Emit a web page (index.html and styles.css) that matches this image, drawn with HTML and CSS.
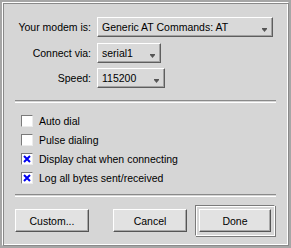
FILE: index.html
```html
<!DOCTYPE html>
<html lang="en">
<head>
  <meta charset="UTF-8">
  <title>Modem settings</title>
  <link rel="stylesheet" href="styles.css">
</head>
<body>
  <div class="window">
    <div class="frame">

      <!-- modem / port / speed -->
      <div class="form">
        <div class="row row-modem">
          <span class="label">Your modem is:</span>
          <div class="combo combo-modem">
            <span>Generic AT Commands: AT</span>
            <svg class="arrow" width="5" height="4" viewBox="0 0 5 4"><rect x="0" y="0" width="5" height="1" fill="#555"/><polygon points="0,1 5,1 2.5,4" fill="#555"/></svg>
          </div>
        </div>
        <div class="row row-port">
          <span class="label">Connect via:</span>
          <div class="combo combo-port">
            <span>serial1</span>
            <svg class="arrow" width="5" height="4" viewBox="0 0 5 4"><rect x="0" y="0" width="5" height="1" fill="#555"/><polygon points="0,1 5,1 2.5,4" fill="#555"/></svg>
          </div>
        </div>
        <div class="row row-speed">
          <span class="label">Speed:</span>
          <div class="combo combo-speed">
            <span>115200</span>
            <svg class="arrow" width="5" height="4" viewBox="0 0 5 4"><rect x="0" y="0" width="5" height="1" fill="#555"/><polygon points="0,1 5,1 2.5,4" fill="#555"/></svg>
          </div>
        </div>
      </div>

      <div class="separator"></div>

      <!-- options -->
      <div class="options">
        <label class="check"><span class="box"></span>Auto dial</label>
        <label class="check"><span class="box"></span>Pulse dialing</label>
        <label class="check"><span class="box"><svg width="8" height="8" viewBox="0 0 8 8"><path d="M1 1 L7 7 M7 1 L1 7" stroke="#0000f0" stroke-width="2"/></svg></span>Display chat when connecting</label>
        <label class="check"><span class="box"><svg width="8" height="8" viewBox="0 0 8 8"><path d="M1 1 L7 7 M7 1 L1 7" stroke="#0000f0" stroke-width="2"/></svg></span>Log all bytes sent/received</label>
      </div>

      <div class="separator sep-bottom"></div>

      <div class="buttons">
        <button class="btn btn-custom">Custom...</button>
        <button class="btn btn-cancel">Cancel</button>
        <div class="default-ring">
          <button class="btn btn-done">Done</button>
        </div>
      </div>

    </div>
  </div>
</body>
</html>
```

FILE: styles.css
```css
body {
  margin: 0;
  background: #d6d6d6;
  font-family: "Liberation Sans", Arial, sans-serif;
  font-size: 10.5px;
  color: #000;
}
.window {
  width: 291px;
  height: 248px;
  box-sizing: border-box;
  border: 2px solid #a6a6a6;
  background: #d6d6d6;
}
.frame {
  height: 100%;
  box-sizing: border-box;
  border-top: 1px solid #ffffff;
  border-left: 1px solid #ffffff;
  border-right: 1px solid #8a8a8a;
  border-bottom: 1px solid #8a8a8a;
  box-shadow: inset 1px 1px 0 #8a8a8a, inset -1px -1px 0 #ffffff;
  padding-top: 14px;
}
.form {
  display: flex;
  flex-direction: column;
}
.row {
  display: grid;
  grid-template-columns: 88px auto;
  column-gap: 6px;
  align-items: center;
  height: 20px;
}
.row-port { margin-top: 6px; }
.row-speed { margin-top: 5px; }
.label {
  text-align: right;
}
.combo {
  height: 20px;
  box-sizing: border-box;
  display: flex;
  align-items: center;
  position: relative;
  padding-left: 4px;
  background: #d9d9d9;
  border-top: 1px solid #ffffff;
  border-left: 1px solid #ffffff;
  border-right: 1px solid #5e5e5e;
  border-bottom: 1px solid #5e5e5e;
  box-shadow: inset -1px -1px 0 #a2a2a2;
}
.combo-modem { width: 176px; }
.combo-port { width: 64px; }
.combo-speed { width: 68px; }
.arrow {
  position: absolute;
  right: 5px;
  bottom: 4px;
}
.separator {
  height: 1px;
  margin: 12px 12px 0;
  border-top: 1px solid #8a8a8a;
  border-bottom: 1px solid #ffffff;
}
.options {
  display: flex;
  flex-direction: column;
  padding: 12px 0 0 18px;
  gap: 7px;
}
.check {
  display: flex;
  align-items: center;
  gap: 6px;
  height: 12px;
}
.box {
  width: 12px;
  height: 12px;
  box-sizing: border-box;
  background: #ffffff;
  border-top: 1px solid #7a7a7a;
  border-left: 1px solid #7a7a7a;
  border-right: 1px solid #ececec;
  border-bottom: 1px solid #ececec;
  display: flex;
  align-items: center;
  justify-content: center;
}
.sep-bottom {
  margin-top: 10px;
}
.buttons {
  display: flex;
  align-items: center;
  margin-top: 8px;
}
.btn {
  font: inherit;
  color: #000;
  width: 74px;
  height: 23px;
  padding: 0;
  background: #e2e2e2;
  border-top: 1px solid #ffffff;
  border-left: 1px solid #ffffff;
  border-right: 1px solid #555555;
  border-bottom: 1px solid #555555;
  box-shadow: inset -1px -1px 0 #a8a8a8;
}
.btn-custom { margin-left: 12px; }
.btn-cancel { margin-left: 24px; }
.default-ring {
  margin-left: 8px;
  padding: 3px;
  border-top: 1px solid #7a7a7a;
  border-left: 1px solid #7a7a7a;
  border-right: 1px solid #ffffff;
  border-bottom: 1px solid #ffffff;
  box-shadow: inset 1px 1px 0 #ffffff, 1px 1px 0 #7a7a7a;
  display: flex;
}
.btn-done { width: 72px; }
```
